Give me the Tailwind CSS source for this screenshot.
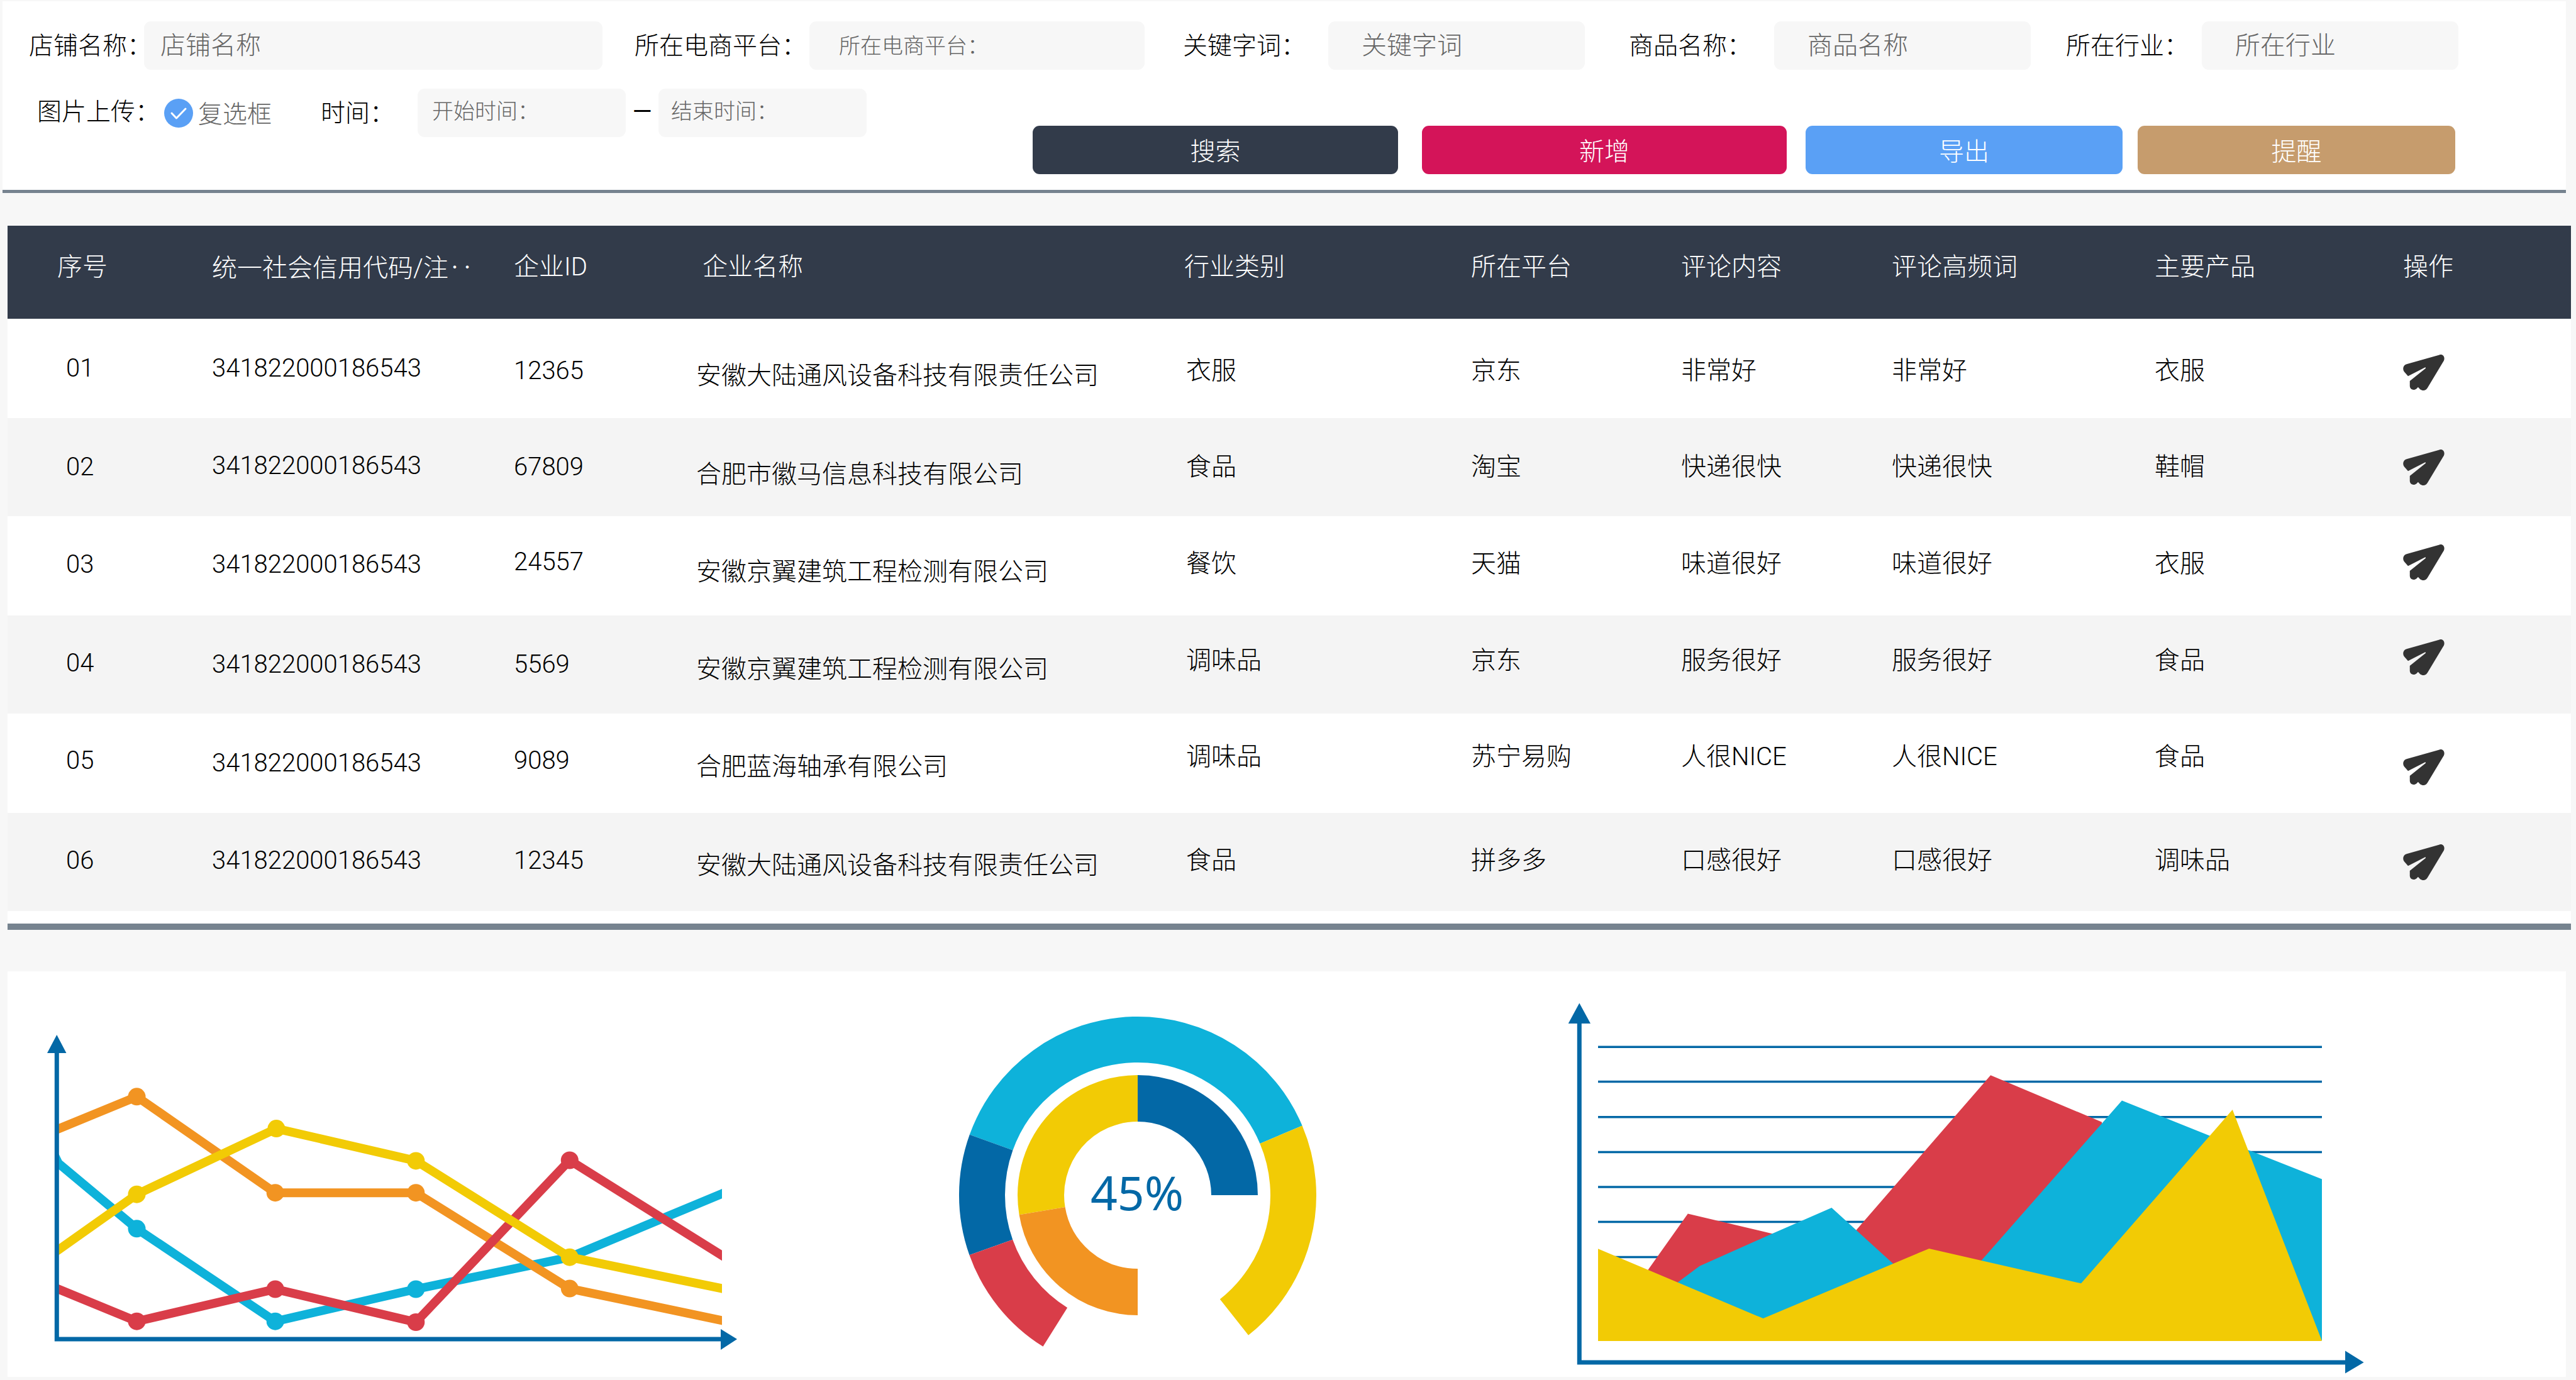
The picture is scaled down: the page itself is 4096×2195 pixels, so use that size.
<!DOCTYPE html>
<html lang="zh-CN">
<head>
<meta charset="utf-8">
<title>电商企业数据</title>
<script src="https://cdn.jsdelivr.net/npm/@tailwindcss/browser@4"></script>
</head>
<body class="min-h-screen bg-[#f7f7f7] font-[Roboto,'Noto_Sans_CJK_SC',sans-serif] text-[40px] leading-[56px] font-light text-black">

<svg class="hidden" aria-hidden="true">
  <symbol id="plane" viewBox="282 153 330 287">
    <path fill="#333333" d="M321 325 L292 293 C273 270 282 236 313 229 L572 155 C600 147 619 172 608 201 L478 417 C463 445 432 447 414 428 L401 414 L389 426 C368 444 336 434 335 405 V365 L462 263 V256 H456 Z"/>
  </symbol>
</svg>

<form class="mt-[2px] mr-4 ml-1 border-b-[5px] border-[#76838f] bg-white pt-8 pb-[25px]">
  <div class="flex h-[77px] items-center pr-[171px] pl-[42px] whitespace-nowrap">
    <label for="shop" class="w-[183px] shrink-0 text-[39px]">店铺名称：</label>
    <input id="shop" type="text" placeholder="店铺名称" class="h-full min-w-0 grow basis-[729px] rounded-[11px] bg-[#f7f7f7] pl-[26px] placeholder:text-[#666666]">
    <label for="platform" class="ml-[51px] w-[278px] shrink-0 text-[39px]">所在电商平台：</label>
    <input id="platform" type="text" placeholder="所在电商平台：" class="h-full min-w-0 grow basis-[533px] rounded-[11px] bg-[#f7f7f7] pl-[47px] text-[34px] placeholder:text-[#666666]">
    <label for="keyword" class="ml-[61px] w-[231px] shrink-0 text-[39px]">关键字词：</label>
    <input id="keyword" type="text" placeholder="关键字词" class="h-full min-w-0 grow basis-[408px] rounded-[11px] bg-[#f7f7f7] pl-[53px] placeholder:text-[#666666]">
    <label for="goods" class="ml-[70px] w-[231px] shrink-0 text-[39px]">商品名称：</label>
    <input id="goods" type="text" placeholder="商品名称" class="h-full min-w-0 grow basis-[408px] rounded-[11px] bg-[#f7f7f7] pl-[53px] placeholder:text-[#666666]">
    <label for="industry" class="ml-[56px] w-[216px] shrink-0 text-[39px]">所在行业：</label>
    <input id="industry" type="text" placeholder="所在行业" class="h-full min-w-0 grow basis-[408px] rounded-[11px] bg-[#f7f7f7] pl-[53px] placeholder:text-[#666666]">
  </div>

  <div class="mt-[30px] flex items-start pr-[176px] pl-[55px] whitespace-nowrap">
    <div class="flex h-[77px] items-center">
      <span class="w-[202px] pb-1 text-[39px]">图片上传：</span>
      <span class="grid size-[46px] place-items-center">
        <input id="upload" type="checkbox" checked class="col-start-1 row-start-1 size-[46px] appearance-none rounded-full bg-[#5aa0f5]">
        <svg class="pointer-events-none col-start-1 row-start-1 size-[46px]" viewBox="0 0 46 46" fill="none" stroke="#ffffff" stroke-width="3" stroke-linecap="round" stroke-linejoin="round"><path d="M12 23 L19.5 31 L34 16"/></svg>
      </span>
      <label for="upload" class="ml-2 w-[120px] pt-1 text-[39px] text-[#666666]">复选框</label>
      <label for="start" class="ml-[75px] w-[154px] text-[39px]">时间：</label>
      <input id="start" type="text" placeholder="开始时间：" class="h-full w-[331px] rounded-[11px] bg-[#f7f7f7] pb-[6px] pl-[23px] text-[34px] placeholder:text-[#666666]">
      <span class="w-[52px] pb-1 text-center font-normal">—</span>
      <input id="end" type="text" aria-label="结束时间" placeholder="结束时间：" class="h-full w-[331px] rounded-[11px] bg-[#f7f7f7] pb-[6px] pl-[20px] text-[34px] placeholder:text-[#666666]">
    </div>
    <div class="mt-[59px] ml-auto flex h-[77px] text-white">
      <button type="button" class="w-[581px] rounded-[11px] bg-[#323b4a] pt-[6px]">搜索</button>
      <button type="button" class="ml-[38px] w-[580px] rounded-[11px] bg-[#d41459] pt-[6px]">新增</button>
      <button type="button" class="ml-[30px] w-[504px] rounded-[11px] bg-[#5aa0f5] pt-[6px]">导出</button>
      <button type="button" class="ml-6 w-[505px] rounded-[11px] bg-[#c69c6d] pt-[6px]">提醒</button>
    </div>
  </div>
</form>

<main class="mt-[52px] pl-3">
  <section class="mr-2 border-b-[10px] border-[#76838f] bg-white pb-5">
    <table class="w-full table-fixed border-collapse text-left whitespace-nowrap">
      <colgroup>
        <col class="w-[325px]"><col class="w-[480px]"><col class="w-[290px]"><col class="w-[776px]"><col class="w-[456px]"><col class="w-[334px]"><col class="w-[335px]"><col class="w-[418px]"><col class="w-[395px]"><col class="w-[267px]">
      </colgroup>
      <thead>
        <tr class="h-[148px] bg-[#323b4a] text-white *:p-0 *:pb-4 *:font-light">
          <th><span class="pl-[79px]">序号</span></th>
          <th>统一社会信用代码/注<span class="font-['Noto_Sans_CJK_SC',sans-serif]">‥</span></th>
          <th>企业ID</th>
          <th><span class="pl-[10px]">企业名称</span></th>
          <th>行业类别</th>
          <th>所在平台</th>
          <th>评论内容</th>
          <th>评论高频词</th>
          <th>主要产品</th>
          <th>操作</th>
        </tr>
      </thead>
      <tbody>
        <tr class="h-[158px]">
          <td class="pl-[93px]">01</td>
          <td>341822000186543</td>
          <td class="pt-2">12365</td>
          <td class="pt-6">安徽大陆通风设备科技有限责任公司</td>
          <td class="pt-2 pl-[3px]">衣服</td>
          <td class="pt-2">京东</td>
          <td class="pt-2">非常好</td>
          <td class="pt-2">非常好</td>
          <td class="pt-2">衣服</td>
          <td class="pt-3"><button type="button" aria-label="发送" class="block"><svg class="h-[57px] w-[66px]"><use href="#plane"/></svg></button></td>
        </tr>
        <tr class="h-[156px] bg-[#f4f4f4]">
          <td class="pl-[93px]">02</td>
          <td class="pb-1">341822000186543</td>
          <td>67809</td>
          <td class="pt-6">合肥市徽马信息科技有限公司</td>
          <td class="pl-[3px]">食品</td>
          <td>淘宝</td>
          <td>快递很快</td>
          <td>快递很快</td>
          <td>鞋帽</td>
          <td><button type="button" aria-label="发送" class="block"><svg class="h-[57px] w-[66px]"><use href="#plane"/></svg></button></td>
        </tr>
        <tr class="h-[158px]">
          <td class="pb-1 pl-[93px]">03</td>
          <td class="pb-1">341822000186543</td>
          <td class="pb-3">24557</td>
          <td class="pt-5">安徽京翼建筑工程检测有限公司</td>
          <td class="pb-[6px] pl-[3px]">餐饮</td>
          <td class="pb-[6px]">天猫</td>
          <td class="pb-[6px]">味道很好</td>
          <td class="pb-[6px]">味道很好</td>
          <td class="pb-[6px]">衣服</td>
          <td class="pb-3"><button type="button" aria-label="发送" class="block"><svg class="h-[57px] w-[66px]"><use href="#plane"/></svg></button></td>
        </tr>
        <tr class="h-[156px] bg-[#f4f4f4]">
          <td class="pb-1 pl-[93px]">04</td>
          <td>341822000186543</td>
          <td>5569</td>
          <td class="pt-4">安徽京翼建筑工程检测有限公司</td>
          <td class="pb-3 pl-[3px]">调味品</td>
          <td class="pb-3">京东</td>
          <td class="pb-3">服务很好</td>
          <td class="pb-3">服务很好</td>
          <td class="pb-3">食品</td>
          <td class="pb-6"><button type="button" aria-label="发送" class="block"><svg class="h-[57px] w-[66px]"><use href="#plane"/></svg></button></td>
        </tr>
        <tr class="h-[158px]">
          <td class="pb-2 pl-[93px]">05</td>
          <td>341822000186543</td>
          <td class="pb-2">9089</td>
          <td class="pt-3">合肥蓝海轴承有限公司</td>
          <td class="pb-5 pl-[3px]">调味品</td>
          <td class="pb-5">苏宁易购</td>
          <td class="pb-5">人很NICE</td>
          <td class="pb-5">人很NICE</td>
          <td class="pb-5">食品</td>
          <td class="pt-3"><button type="button" aria-label="发送" class="block"><svg class="h-[57px] w-[66px]"><use href="#plane"/></svg></button></td>
        </tr>
        <tr class="h-[156px] bg-[#f4f4f4]">
          <td class="pb-1 pl-[93px]">06</td>
          <td class="pb-1">341822000186543</td>
          <td class="pb-1">12345</td>
          <td class="pt-3">安徽大陆通风设备科技有限责任公司</td>
          <td class="pb-1 pl-[3px]">食品</td>
          <td class="pb-1">拼多多</td>
          <td class="pb-1">口感很好</td>
          <td class="pb-1">口感很好</td>
          <td class="pb-1">调味品</td>
          <td><button type="button" aria-label="发送" class="block"><svg class="h-[57px] w-[66px]"><use href="#plane"/></svg></button></td>
        </tr>
      </tbody>
    </table>
  </section>

  <section class="mt-[66px] mr-4 flex bg-white">
    <!-- 折线图 -->
    <svg class="h-[645px] w-[1188px] shrink-0" viewBox="12 1545 1188 645" role="img" aria-label="折线图">
      <clipPath id="plot"><rect x="90" y="1640" width="1058" height="500"/></clipPath>
      <g clip-path="url(#plot)" stroke-width="14">
        <polyline fill="none" stroke="#0eb2da" points="80,1824 93,1850.5 217.5,1954.3 437.7,2101.7 661.3,2050.5 905.8,1999.7 1148.5,1898.4 1160,1893"/>
        <g fill="#0eb2da" stroke="none"><circle cx="217.5" cy="1954.3" r="14"/><circle cx="437.7" cy="2101.7" r="14"/><circle cx="661.3" cy="2050.5" r="14"/></g>
        <polyline fill="none" stroke="#f29422" points="80,1801 93,1795.5 217.5,1744.3 437.7,1897.2 661.3,1897.2 905.8,2049.6 1148.5,2100.5 1160,2103"/>
        <g fill="#f29422" stroke="none"><circle cx="217.5" cy="1744.3" r="14"/><circle cx="437.7" cy="1897.2" r="14"/><circle cx="661.3" cy="1897.2" r="14"/><circle cx="905.8" cy="2049.6" r="14"/></g>
        <polyline fill="none" stroke="#d93d49" points="80,2045 93,2050.5 217.5,2101.7 437.7,2050.5 661.3,2103 905.8,1845.5 1148.5,1997.2 1160,2004.5"/>
        <g fill="#d93d49" stroke="none"><circle cx="217.5" cy="2101.7" r="14"/><circle cx="437.7" cy="2050.5" r="14"/><circle cx="661.3" cy="2103" r="14"/><circle cx="905.8" cy="1845.5" r="14"/></g>
        <polyline fill="none" stroke="#f2cb05" points="80,1997 93,1988 217.5,1899.7 439.4,1795.1 661.3,1846.4 905.8,1999.7 1148.5,2049.6 1160,2052"/>
        <g fill="#f2cb05" stroke="none"><circle cx="217.5" cy="1899.7" r="14"/><circle cx="439.4" cy="1795.1" r="14"/><circle cx="661.3" cy="1846.4" r="14"/><circle cx="905.8" cy="1999.7" r="14"/></g>
      </g>
      <path fill="none" stroke="#0368a6" stroke-width="7" d="M90.3 1670 V2130 H1150"/>
      <path fill="#0368a6" d="M90.3 1646 L105.5 1675 H75 Z M1172 2130 L1146 2114 V2147 Z"/>
    </svg>

    <!-- 环形图 -->
    <svg class="ml-[300px] h-[645px] w-[620px] shrink-0" viewBox="1500 1545 620 645" role="img" aria-label="环形图">
      <g transform="translate(1809 1901)" fill="none">
        <g stroke-width="73">
          <path stroke="#0eb2da" d="M-232.9 -83.8 A247.5 247.5 0 0 1 228 -96.3"/>
          <path stroke="#f2cb05" d="M228 -96.3 A247.5 247.5 0 0 1 153.4 194.2"/>
          <path stroke="#0368a6" d="M-233.2 83 A247.5 247.5 0 0 1 -232.9 -83.8"/>
          <path stroke="#d93d49" d="M-131.2 209.9 A247.5 247.5 0 0 1 -233.2 83"/>
        </g>
        <g stroke-width="74">
          <path stroke="#0368a6" d="M0 -154 A154 154 0 0 1 154 0"/>
          <path stroke="#f2cb05" d="M-151.9 25.1 A154 154 0 0 1 0 -154"/>
          <path stroke="#f29422" d="M0 154 A154 154 0 0 1 -151.9 25.1"/>
        </g>
      </g>
      <text x="1808" y="1925" text-anchor="middle" fill="#0368a6" class="font-['Noto_Sans',sans-serif] text-[75px] font-normal">45%</text>
    </svg>

    <!-- 面积图 -->
    <svg class="ml-[360px] h-[645px] w-[1300px] shrink-0" viewBox="2480 1545 1300 645" role="img" aria-label="面积图">
      <path stroke="#0368a6" stroke-width="3.5" d="M2541 1665.2 H3692 M2541 1720.6 H3692 M2541 1776.8 H3692 M2541 1832.4 H3692 M2541 1888 H3692 M2541 1943.6 H3692 M2541 1999.4 H3692"/>
      <path fill="#d93d49" d="M2600 2130 L2620 2020.5 L2683.8 1930.5 L2817.9 1962.2 L2922 1988 L2952 1955.9 L3165.2 1710.2 L3342.1 1784.7 V2130 Z"/>
      <path fill="#0eb2da" d="M2640 2130 L2667.3 2040 L2702.5 2013.8 L2817.9 1962.2 L2912.4 1920.9 L3010.2 2010 L3054 2050 H3110 L3150.9 2004.6 L3374 1750.6 L3513.6 1806.4 L3587.2 1833.9 L3692 1875.5 V2132 Z"/>
      <path fill="#f2cb05" d="M2541 1986.3 L2803.6 2097.1 L3067.4 1985.9 L3309.1 2041.3 L3549.8 1765.1 L3691.6 2131.7 V2133 H2541 Z"/>
      <path fill="none" stroke="#0368a6" stroke-width="7" d="M2511.3 1620 V2167 H3735"/>
      <path fill="#0368a6" d="M2511.3 1595.6 L2529 1628 H2493.7 Z M3758.6 2167 L3729 2148.4 V2184.6 Z"/>
    </svg>
  </section>
</main>
</body>
</html>
